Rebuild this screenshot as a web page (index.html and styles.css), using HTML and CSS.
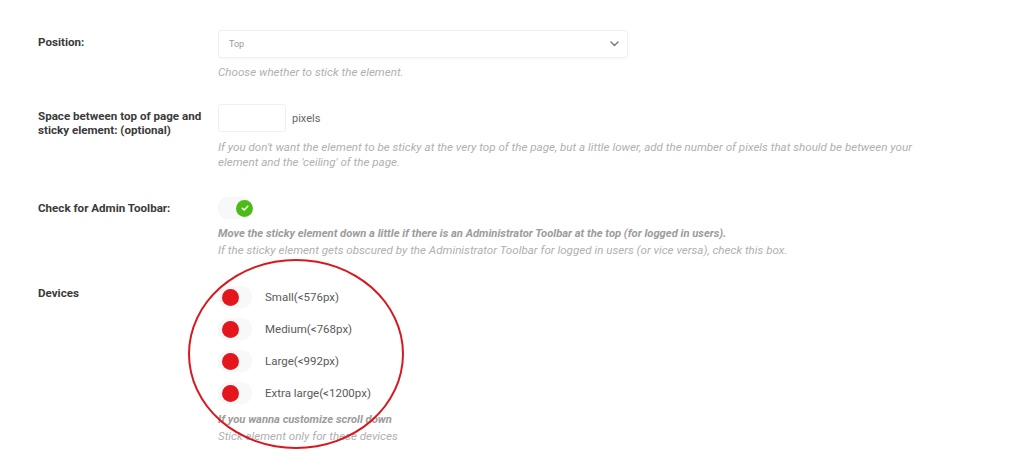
FILE: index.html
```html
<!DOCTYPE html>
<html lang="en">
<head>
  <meta charset="UTF-8" />
  <title>Sticky Element Settings</title>
  <link rel="stylesheet" href="styles.css">
</head>
<body>
  <div class="settings">
    <div class="row row-position">
      <div class="label">Position:</div>
      <div class="field">
        <div class="select">
          <span>Top</span>
          <svg class="chevron" width="9" height="6" viewBox="0 0 9 6"><path d="M1 1 L4.5 4.5 L8 1" fill="none" stroke="#777" stroke-width="1.4" stroke-linecap="round" stroke-linejoin="round"/></svg>
        </div>
        <p class="help">Choose whether to stick the element.</p>
      </div>
    </div>

    <div class="row row-space">
      <div class="label">Space between top of page and<br>sticky element: (optional)</div>
      <div class="field">
        <div class="inline">
          <div class="input"></div>
          <span class="unit">pixels</span>
        </div>
        <p class="help">If you don't want the element to be sticky at the very top of the page, but a little lower, add the number of pixels that should be between your element and the 'ceiling' of the page.</p>
      </div>
    </div>

    <div class="row row-admin">
      <div class="label">Check for Admin Toolbar:</div>
      <div class="field">
        <div class="toggle on">
          <span class="knob">
            <svg width="10" height="10" viewBox="0 0 10 10"><path d="M2.3 5.2 L4.2 7 L7.8 3.2" fill="none" stroke="#fff" stroke-width="1.5" stroke-linecap="round" stroke-linejoin="round"/></svg>
          </span>
        </div>
        <p class="help help-tall"><strong>Move the sticky element down a little if there is an Administrator Toolbar at the top (for logged in users).</strong><br>If the sticky element gets obscured by the Administrator Toolbar for logged in users (or vice versa), check this box.</p>
      </div>
    </div>

    <div class="row row-devices">
      <div class="label">Devices</div>
      <div class="field">
        <div class="devices">
          <div class="device"><div class="toggle off"><span class="knob"></span></div><span>Small(&lt;576px)</span></div>
          <div class="device"><div class="toggle off"><span class="knob"></span></div><span>Medium(&lt;768px)</span></div>
          <div class="device"><div class="toggle off"><span class="knob"></span></div><span>Large(&lt;992px)</span></div>
          <div class="device"><div class="toggle off"><span class="knob"></span></div><span>Extra large(&lt;1200px)</span></div>
        </div>
        <p class="help help-tall"><strong>If you wanna customize scroll down</strong><br>Stick element only for these devices</p>
      </div>
    </div>

    <div class="highlight"></div>
  </div>
</body>
</html>
```

FILE: styles.css
```css
* {
  box-sizing: border-box;
}

body {
  margin: 0;
  background: #fff;
  font-family: Roboto, 'Liberation Sans', sans-serif;
  color: #333;
}

.settings {
  position: relative;
  padding: 30px 0 0 38px;
  height: 472px;
}

.row {
  display: grid;
  grid-template-columns: 180px 1fr;
}

.label {
  font-size: 11.6px;
  font-weight: 700;
  line-height: 14px;
  color: #3a3a3a;
}

.help {
  margin: 7px 0 0;
  font-size: 11.6px;
  font-style: italic;
  line-height: 14px;
  color: #b0b0b0;
}

.help strong {
  font-size: 11.2px;
  color: #9c9c9c;
}

.help-tall {
  line-height: 16px;
}

/* position */
.row-position .label {
  padding-top: 5px;
}

.select {
  width: 410px;
  height: 28px;
  border: 1px solid #f0f0f0;
  border-radius: 3px;
  box-shadow: 0 1px 2px rgba(0, 0, 0, 0.03);
  display: flex;
  align-items: center;
  justify-content: space-between;
  padding: 0 8px 0 10px;
  font-size: 9px;
  color: #999;
}

/* space */
.row-space {
  margin-top: 25px;
}

.row-space .label {
  padding-top: 5px;
}

.inline {
  display: flex;
  align-items: center;
  gap: 6px;
}

.input {
  width: 68px;
  height: 28px;
  border: 1px solid #f0f0f0;
  border-radius: 3px;
}

.unit {
  font-size: 11px;
  color: #666;
}

.row-space .help {
  margin-top: 8px;
  line-height: 15px;
  max-width: 720px;
}

/* toggles */
.toggle {
  width: 34px;
  height: 22px;
  border-radius: 11px;
  background: #f8f8f8;
  box-shadow: 0 0 1px rgba(0, 0, 0, 0.05);
  display: flex;
  align-items: center;
  padding: 0 4px;
}

.toggle.on {
  justify-content: flex-end;
  padding: 0 0 0 4px;
}

.toggle.on .knob {
  margin-right: -1px;
}

.knob {
  width: 17px;
  height: 17px;
  border-radius: 50%;
  display: flex;
  align-items: center;
  justify-content: center;
}

.toggle.on .knob {
  background: #4cbb17;
}

.toggle.off .knob {
  background: #e3161d;
}

.row-admin {
  margin-top: 27px;
}

.row-admin .label {
  padding-top: 4px;
}

.row-admin .help {
  margin-top: 6px;
}

/* devices */
.row-devices {
  margin-top: 28px;
}

.devices {
  display: flex;
  flex-direction: column;
  gap: 10px;
}

.device {
  display: flex;
  align-items: center;
  gap: 13px;
  font-size: 11.5px;
  color: #5a5a5a;
}

.row-devices .help {
  margin-top: 7px;
}

/* annotation ring drawn over the form */
.highlight {
  position: absolute;
  left: 188px;
  top: 259px;
  width: 216px;
  height: 190px;
  border: 2.5px solid #d7191f;
  border-radius: 50%;
}
```
